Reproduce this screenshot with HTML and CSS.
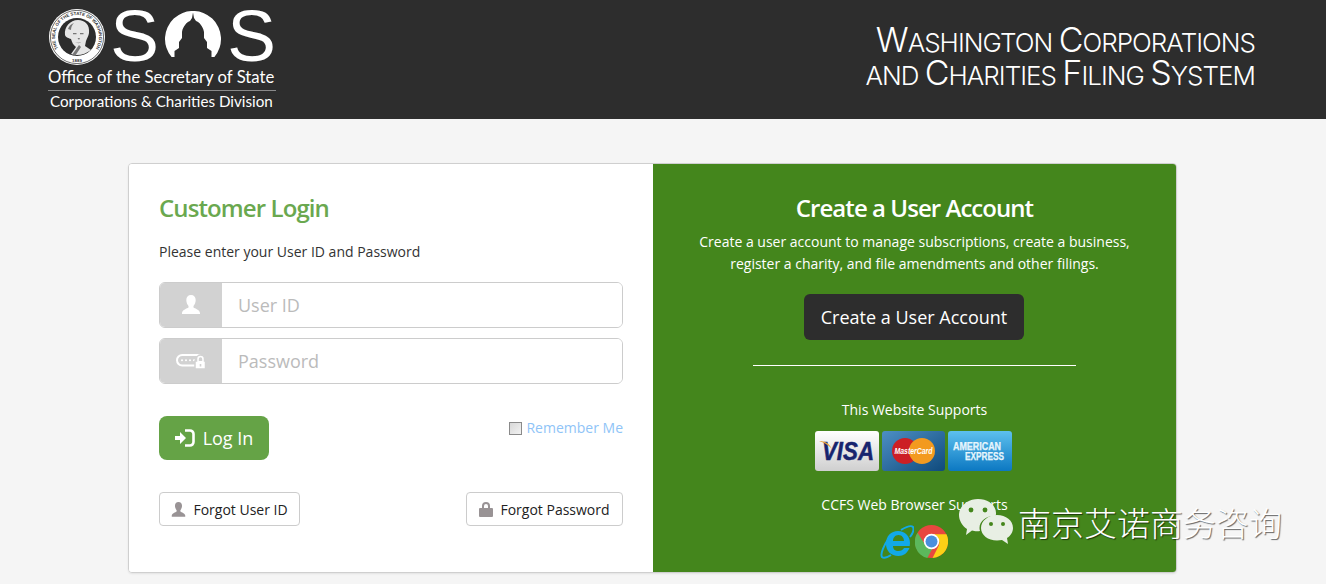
FILE: index.html
```html
<!DOCTYPE html>
<html lang="en">
<head>
    <meta charset="UTF-8">
    <meta name="viewport" content="width=device-width, initial-scale=1.0">
    <title>Washington Corporations and Charities Filing System</title>
    <link rel="stylesheet" href="styles.css">
</head>
<body>
    <header class="site-header">
        <div class="logo">
            <div class="logo-mark">
                <svg class="seal" width="58" height="58" viewBox="0 0 58 58">
                    <defs>
                        <path id="sealTop" d="M11 41.6A22 22 0 1 1 47 41.6"/>
                    </defs>
                    <circle cx="29" cy="29" r="28" fill="#fff"/>
                    <circle cx="29" cy="29" r="26.6" fill="none" stroke="#2d2d2d" stroke-width=".7"/>
                    <circle cx="29" cy="29" r="19" fill="#2d2d2d"/>
                    <text class="seal-text"><textPath href="#sealTop" startOffset="50%" text-anchor="middle">THE SEAL OF THE STATE OF WASHINGTON</textPath></text>
                    <text class="seal-text" x="29" y="54" text-anchor="middle">1889</text>
                    <path fill="#e6e6e6" d="M17 27c-1-8 5-15 13-15 7 0 12 5 11 13-.3 3-2 5-3 8l-1 5 6 4c-4 3-9 5-14 5-2 0-4-.4-6-1l5-7c-3-2-4-5-5-8-2-1-5-1-6-4z"/>
                    <path fill="#777" d="M25 25h3.500v1.200H25zM32 25h3.500v1.200H32zM29.500 30h2.500l-1 2zM27 34c2 1 4 1 6 0-1 1.500-4 1.500-6 0zM20 21c1-3 3-5 6-6-2 2-3 4-3 7zM24 47l7-10 2 2-6 9z"/>
                </svg>
                <span class="logo-s">S</span>
                <svg class="dome" width="56" height="46" viewBox="0 0 56 46">
                    <path fill="#fff" d="M6.600 46A28 28 0 1 1 49.400 46H46.500V40L42 37V31L39 27V21C38 15 34 11 31 10L29 7 28 1.500 27 7 25 10C22 11 18 15 17 21V27L14 31V37L9.500 40V46Z"/>
                </svg>
                <span class="logo-s logo-s-last">S</span>
            </div>
            <div class="logo-office">Office of the Secretary of State</div>
            <div class="logo-division">Corporations &amp; Charities Division</div>
        </div>
        <div class="site-title">
            <div><span class="cap">W</span>ASHINGTON <span class="cap">C</span>ORPORATIONS</div>
            <div>AND <span class="cap">C</span>HARITIES <span class="cap">F</span>ILING <span class="cap">S</span>YSTEM</div>
        </div>
    </header>

    <main class="login-card">
        <section class="login-panel">
            <h2>Customer Login</h2>
            <p class="login-hint">Please enter your User ID and Password</p>

            <div class="input-row">
                <span class="input-addon">
                    <svg width="20" height="20" viewBox="0 0 20 20"><path fill="#fff" d="M10 0c3 0 4.700 2 4.700 5 0 2.500-1 4.500-2.200 6v1.500c1.500 1.200 6 2 6.500 5.500v1H1v-1c.5-3.500 5-4.300 6.500-5.500V11C6.300 9.500 5.300 7.500 5.300 5 5.300 2 7 0 10 0z"/></svg>
                </span>
                <input class="text-input" type="text" placeholder="User ID">
            </div>
            <div class="input-row">
                <span class="input-addon">
                    <svg width="30" height="16" viewBox="0 0 30 16">
                        <rect x="1" y="2" width="26" height="10.500" rx="5.200" fill="none" stroke="#fff" stroke-width="2"/>
                        <circle cx="6" cy="7.200" r="1" fill="#fff"/><circle cx="10" cy="7.200" r="1" fill="#fff"/><circle cx="14" cy="7.200" r="1" fill="#fff"/><circle cx="18" cy="7.200" r="1" fill="#fff"/>
                        <path fill="#fff" stroke="#d2d2d2" stroke-width="1.500" d="M19 8h1.500V6a4 4 0 0 1 8 0v2h1v8H19z"/>
                        <path fill="#d2d2d2" d="M22.800 8V6a1.700 1.700 0 0 1 3.400 0v2zM23.700 11h1.600v2.500h-1.600z"/>
                    </svg>
                </span>
                <input class="text-input" type="password" placeholder="Password">
            </div>

            <div class="login-actions">
                <button class="btn-login" type="button">
                    <svg width="20" height="18" viewBox="0 0 20 18"><path fill="#fff" d="M0 7h5V3l6 6-6 6v-4H0z"/><path fill="none" stroke="#fff" stroke-width="2.600" d="M10 1.500h5a3.500 3.500 0 0 1 3.500 3.500v8a3.500 3.500 0 0 1-3.500 3.500h-5"/></svg>
                    Log In
                </button>
                <label class="remember"><input type="checkbox"> Remember Me</label>
            </div>

            <div class="forgot-row">
                <button class="btn-forgot" type="button">
                    <svg width="15" height="15" viewBox="0 0 20 20"><path fill="#999395" d="M10 0c3 0 4.700 2 4.700 5 0 2.500-1 4.500-2.200 6v1.500c1.500 1.200 6 2 6.500 5.500v1.500H1V18c.5-3.500 5-4.300 6.500-5.500V11C6.300 9.500 5.300 7.500 5.300 5 5.300 2 7 0 10 0z"/></svg>
                    Forgot User ID
                </button>
                <button class="btn-forgot btn-forgot-pass" type="button">
                    <svg width="14" height="15" viewBox="0 0 14 15"><path fill="#999395" d="M1 6h2V4a4 4 0 0 1 8 0v2h2a1 1 0 0 1 1 1v7a1 1 0 0 1-1 1H1a1 1 0 0 1-1-1V7a1 1 0 0 1 1-1zm4 0h4V4a2 2 0 0 0-4 0z"/></svg>
                    Forgot Password
                </button>
            </div>
        </section>

        <section class="signup-panel">
            <h2>Create a User Account</h2>
            <p class="signup-text">Create a user account to manage subscriptions, create a business, register a charity, and file amendments and other filings.</p>
            <button class="btn-create" type="button">Create a User Account</button>
            <hr class="divider">
            <p class="supports">This Website Supports</p>
            <div class="pay-cards">
                <svg width="64" height="40" viewBox="0 0 64 40">
                    <defs><linearGradient id="visaBg" x1="0" y1="0" x2="0" y2="1"><stop offset="0" stop-color="#fff"/><stop offset="1" stop-color="#cfcfcf"/></linearGradient></defs>
                    <rect width="64" height="40" rx="3" fill="url(#visaBg)"/>
                    <text class="visa-text" x="33" y="29" text-anchor="middle" textLength="52" lengthAdjust="spacingAndGlyphs">VISA</text>
                    <path fill="#e9a33b" d="M4 10c6 0 10 2 13 8-4-4-7-6-13-8z"/>
                </svg>
                <svg width="63" height="40" viewBox="0 0 63 40">
                    <defs><linearGradient id="mcBg" x1="0" y1="0" x2="1" y2="1"><stop offset="0" stop-color="#4d8fc4"/><stop offset="1" stop-color="#0f4a7c"/></linearGradient></defs>
                    <rect width="63" height="40" rx="3" fill="url(#mcBg)"/>
                    <circle cx="23" cy="20" r="13" fill="#cc1f25"/>
                    <circle cx="40" cy="20" r="13" fill="#f39a1f"/>
                    <text class="mc-text" x="31.500" y="23" text-anchor="middle" textLength="38" lengthAdjust="spacingAndGlyphs">MasterCard</text>
                </svg>
                <svg width="64" height="40" viewBox="0 0 64 40">
                    <defs><linearGradient id="axBg" x1="0" y1="0" x2="0" y2="1"><stop offset="0" stop-color="#5dc0ee"/><stop offset="1" stop-color="#0c78c2"/></linearGradient></defs>
                    <rect width="64" height="40" rx="3" fill="url(#axBg)"/>
                    <text class="ax-text" x="5" y="19" textLength="48" lengthAdjust="spacingAndGlyphs">AMERICAN</text>
                    <text class="ax-text" x="17" y="29" textLength="39" lengthAdjust="spacingAndGlyphs">EXPRESS</text>
                </svg>
            </div>
            <p class="supports supports-browser">CCFS Web Browser Supports</p>
            <div class="browsers">
                <svg width="34" height="34" viewBox="0 0 34 34">
                    <path fill="#12a9e8" d="M18 6c7 0 12 5 12 12l-.3 3H13c0 3 2 5 5.500 5 2.500 0 4.500-1 5.500-3h5.500c-2 5-6 8-11 8C11 31 6 26 6 19 6 11 11 6 18 6zm-5 10h11c0-3-2-6-5.500-6S13 13 13 16z"/>
                    <path fill="none" stroke="#12a9e8" stroke-width="2" d="M9 13C4 20 0 29 2 32c2 2 6 0 9-2M21 5c5-3 10-5 12-3 1 2 0 6-3 10"/>
                </svg>
                <svg width="33" height="33" viewBox="0 0 32 32">
                    <circle cx="16" cy="16" r="16" fill="#e8473f"/>
                    <path fill="#fcd116" d="M16 9h14.500A16 16 0 0 1 17 32l6-12a8 8 0 0 0-7-11z"/>
                    <path fill="#5cb85c" d="M2.500 7.500l7.500 12a7 7 0 0 0 7 3l-5 9.500A16 16 0 0 1 2.500 7.500z"/>
                    <circle cx="16" cy="16" r="7.500" fill="#fff"/>
                    <circle cx="16" cy="16" r="5.800" fill="#4a8fdc"/>
                </svg>
            </div>
        </section>
    </main>

    <div class="watermark">
        <svg width="54" height="46" viewBox="0 0 54 46">
            <path fill="#e8efe4" d="M19 0c10 0 18 6 18 14 0 1 0 2-.5 3-8-.5-16 4-16 12 0 1 .2 2 .5 3-1 .2-2 .2-3 .2-2 0-3.500-.3-5-.7L7 36l1-6C3 27 0 21 0 16 0 7 9 0 19 0z"/>
            <path fill="#e8efe4" d="M38 16c9 0 16 5.500 16 13 0 4-2.500 8-6 10l1 6-6-4c-1.500.3-3 .5-5 .5-9 0-16-5.500-16-12.500S29 16 38 16z"/>
            <circle cx="12" cy="11" r="2.400" fill="#44861c"/><circle cx="26" cy="11" r="2.400" fill="#44861c"/>
            <circle cx="32" cy="25" r="2" fill="#44861c"/><circle cx="44" cy="25" r="2" fill="#44861c"/>
        </svg>
        <span class="watermark-text">南京艾诺商务咨询</span>
    </div>
</body>
</html>
```

FILE: styles.css
```css
* {
    margin: 0;
    padding: 0;
    box-sizing: border-box;
}

html, body {
    height: 584px;
    overflow: hidden;
}

body {
    font-family: 'Open Sans', sans-serif;
    background: #f5f5f5;
    color: #333;
    position: relative;
}

/* Header */
.site-header {
    height: 119px;
    background: #2d2d2d;
    display: flex;
    justify-content: space-between;
    padding: 8px 71px 0 48px;
    color: #fff;
}

.logo {
    width: 228px;
}

.logo-mark {
    display: flex;
    align-items: flex-start;
    height: 58px;
}

.seal {
    flex: none;
    margin-right: 2.5px;
}

.seal-text {
    font-family: 'Liberation Sans', sans-serif;
    font-size: 4.4px;
    font-weight: 700;
    fill: #2d2d2d;
}

.logo-s {
    font-family: 'Liberation Sans', sans-serif;
    font-size: 73px;
    line-height: 56px;
    width: 52px;
    text-align: center;
    flex: none;
}

.logo-s-last {
    margin-right: -3px;
}

.dome {
    flex: none;
    margin: 3px 4.5px 0;
}

.logo-office {
    font-family: 'Lato', sans-serif;
    font-size: 16.7px;
    line-height: 20px;
    margin-top: 1px;
    white-space: nowrap;
    border-bottom: 1px solid #8a8a8a;
    padding-bottom: 3px;
}

.logo-division {
    font-family: 'Lato', sans-serif;
    font-size: 15.2px;
    line-height: 20px;
    margin-left: 2px;
    white-space: nowrap;
}

.site-title {
    font-family: 'Inter', sans-serif;
    font-weight: 300;
    font-size: 26px;
    line-height: 33px;
    letter-spacing: -0.98px;
    text-align: right;
    padding-top: 18px;
    white-space: nowrap;
}

.cap {
    font-size: 34px;
    line-height: 0;
}

/* Card */
.login-card {
    width: 1049px;
    height: 410px;
    margin: 44px 0 0 128px;
    display: grid;
    grid-template-columns: 524px 523px;
    border: 1px solid #cfcfcf;
    border-radius: 4px;
    box-shadow: 0 1px 2px rgba(0, 0, 0, 0.08);
    overflow: hidden;
}

.login-panel {
    background: #fff;
    padding: 27px 30px 0;
}

.login-panel h2 {
    font-size: 24px;
    font-weight: 600;
    line-height: 33px;
    letter-spacing: -0.9px;
    color: #6aa84f;
}

.login-hint {
    font-size: 14px;
    line-height: 20px;
    margin: 18px 0 20px;
}

.input-row {
    display: flex;
    height: 46px;
    margin-bottom: 10px;
    border: 1px solid #ccc;
    border-radius: 6px;
    overflow: hidden;
}

.input-addon {
    width: 62px;
    flex: none;
    background: #d2d2d2;
    display: flex;
    align-items: center;
    justify-content: center;
}

.text-input {
    flex: 1;
    min-width: 0;
    border: none;
    outline: none;
    padding: 0 16px;
    font-family: inherit;
    font-size: 18px;
    color: #555;
}

.text-input::placeholder {
    color: #bbb;
    opacity: 1;
}

.login-actions {
    display: flex;
    justify-content: space-between;
    align-items: flex-start;
    margin-top: 32px;
}

.btn-login {
    width: 110px;
    height: 44px;
    background: #65a346;
    color: #fff;
    border: none;
    border-radius: 8px;
    font-family: inherit;
    font-size: 18px;
    display: flex;
    align-items: center;
    justify-content: center;
    gap: 8px;
}

.remember {
    font-size: 14px;
    line-height: 20px;
    color: #8fc4f7;
    display: flex;
    align-items: center;
    gap: 4px;
    margin-top: 2px;
}

.remember input {
    appearance: none;
    width: 13px;
    height: 13px;
    margin: 0;
    border: 1px solid #8a8a8a;
    background: linear-gradient(135deg, #d8d8d8, #f2f2f2);
}

.forgot-row {
    display: flex;
    justify-content: space-between;
    margin-top: 32px;
}

.btn-forgot {
    width: 141px;
    height: 34px;
    background: #fff;
    border: 1px solid #ccc;
    border-radius: 4px;
    font-family: inherit;
    font-size: 14px;
    color: #222;
    display: flex;
    align-items: center;
    justify-content: center;
    gap: 7px;
}

.btn-forgot-pass {
    width: 157px;
}

.signup-panel {
    background: #44861c;
    color: #fff;
    text-align: center;
    padding-top: 27px;
    display: flex;
    flex-direction: column;
    align-items: center;
}

.signup-panel h2 {
    font-size: 24px;
    font-weight: 600;
    line-height: 33px;
    letter-spacing: -0.95px;
}

.signup-text {
    width: 450px;
    font-size: 14px;
    line-height: 22px;
    margin-top: 7px;
}

.btn-create {
    width: 220px;
    height: 46px;
    margin: 19px 1px 0 0;
    background: #2d2d2d;
    color: #fff;
    border: none;
    border-radius: 6px;
    font-family: inherit;
    font-size: 18px;
}

.divider {
    width: 323px;
    border: none;
    border-top: 1px solid #fff;
    margin-top: 25px;
}

.supports {
    font-size: 14px;
    line-height: 20px;
    margin-top: 34px;
}

.pay-cards {
    display: flex;
    gap: 3px;
    margin: 11px 2px 0 0;
}

.visa-text {
    font-family: 'Liberation Sans', sans-serif;
    font-size: 25px;
    font-weight: 700;
    font-style: italic;
    fill: #17246e;
    stroke: #17246e;
    stroke-width: 0.5px;
}

.mc-text {
    font-family: 'Liberation Sans', sans-serif;
    font-size: 9px;
    font-weight: 700;
    font-style: italic;
    fill: #fff;
}

.ax-text {
    font-family: 'Liberation Sans', sans-serif;
    font-size: 10px;
    font-weight: 700;
    fill: #dff2fc;
    stroke: #fff;
    stroke-width: 0.25px;
}

.supports-browser {
    margin-top: 24px;
}

.browsers {
    display: flex;
    gap: 1px;
    margin: 10px 1px 0 0;
}

/* Overlay stamped on top of the screenshot */
.watermark {
    position: absolute;
    left: 959px;
    top: 499px;
    display: flex;
    align-items: center;
    gap: 5px;
    pointer-events: none;
}

.watermark-text {
    font-family: 'Noto Sans CJK SC', sans-serif;
    font-weight: 300;
    font-size: 33px;
    line-height: 46px;
    color: #fff;
    white-space: nowrap;
    text-shadow: 1px 1px 1px rgba(0, 0, 0, 0.6);
}
```
